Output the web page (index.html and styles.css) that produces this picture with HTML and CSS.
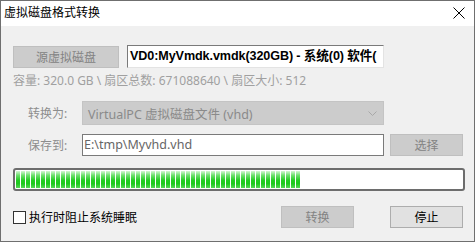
FILE: index.html
```html
<!DOCTYPE html>
<html lang="zh">
<head>
<meta charset="utf-8">
<link rel="stylesheet" href="styles.css">
</head>
<body>
<div class="window">
  <div class="titlebar">
    <span class="title">虚拟磁盘格式转换</span>
    <svg class="close" width="12" height="12" viewBox="0 0 12 12"><path d="M0.5 0.5 L11.5 11.5 M11.5 0.5 L0.5 11.5" stroke="#000" stroke-width="1"/></svg>
  </div>
  <div class="content">
    <div class="row row-src">
      <div class="btn disabled btn-src">源虚拟磁盘</div>
      <div class="srcfield">VD0:MyVmdk.vmdk(320GB) - 系统(0) 软件(</div>
    </div>
    <div class="info">容量: 320.0 GB \ 扇区总数: 671088640 \ 扇区大小: 512</div>
    <div class="row row-conv">
      <span class="label">转换为:</span>
      <div class="select">
        <span>VirtualPC 虚拟磁盘文件 (vhd)</span>
        <svg class="chev" width="9" height="5" viewBox="0 0 9 5"><path d="M0.5 0.5 L4.5 4.5 L8.5 0.5" fill="none" stroke="#a8a8a8" stroke-width="1"/></svg>
      </div>
    </div>
    <div class="row row-save">
      <span class="label">保存到:</span>
      <div class="path">E:\tmp\Myvhd.vhd</div>
      <div class="btn disabled btn-choose">选择</div>
    </div>
    <div class="progress"><div class="fill" style="width:284px"></div></div>
    <div class="row row-bottom">
      <label class="check"><span class="box"></span><span>执行时阻止系统睡眠</span></label>
      <div class="btn disabled btn-conv">转换</div>
      <div class="btn btn-stop">停止</div>
    </div>
  </div>
</div>
</body>
</html>
```

FILE: styles.css
```css
html, body {
  margin: 0;
  padding: 0;
  background: #f0f0f0;
}
.window {
  width: 475px;
  height: 242px;
  box-sizing: border-box;
  border: 1px solid #6f6f6f;
  background: #f0f0f0;
  font-family: "Noto Sans", "Noto Sans CJK SC", sans-serif;
  font-size: 12px;
  color: #000;
  overflow: hidden;
}
.titlebar {
  height: 25px;
  background: #fff;
  display: flex;
  align-items: center;
  justify-content: space-between;
  padding: 0 9px 0 3px;
}
.title {
  font-size: 12px;
  line-height: 16px;
  margin-top: -2px;
}
.close {
  display: block;
  margin-top: -1px;
}
.content {
  padding: 0 11px 0 11px;
}
.row {
  display: flex;
  align-items: center;
}
.btn {
  box-sizing: border-box;
  height: 22px;
  display: flex;
  align-items: center;
  justify-content: center;
  border: 1px solid #adadad;
  background: #e1e1e1;
  color: #000;
  font-size: 12px;
}
.btn.disabled {
  background: #cccccc;
  border-color: #bfbfbf;
  color: #838383;
}
.row-src {
  margin-top: 19px;
  height: 23px;
}
.btn-src {
  width: 106px;
  margin-left: 1px;
}
.srcfield {
  box-sizing: border-box;
  margin-left: 8px;
  width: 257px;
  height: 23px;
  background: #fff;
  border-top: 1px solid #7a7a7a;
  border-left: 1px solid #7a7a7a;
  border-bottom: 1px solid #e3e3e3;
  border-right: 1px solid #e3e3e3;
  font-family: "Liberation Sans", "Noto Sans CJK SC", sans-serif;
  font-weight: bold;
  font-size: 12.6px;
  letter-spacing: -0.1px;
  line-height: 20px;
  padding-left: 2px;
  white-space: nowrap;
  overflow: hidden;
}
.info {
  margin-top: 6px;
  height: 14px;
  line-height: 14px;
  color: #a0a0a0;
  font-size: 12px;
  margin-left: 1px;
}
.label {
  width: 70px;
  padding-left: 16px;
  box-sizing: border-box;
  color: #8d8d8d;
}
.row-conv {
  margin-top: 13px;
}
.select {
  box-sizing: border-box;
  width: 302px;
  height: 24px;
  background: #cccccc;
  border: 1px solid #c4c4c4;
  color: #8a8a8a;
  display: flex;
  align-items: center;
  justify-content: space-between;
  padding: 0 6px 0 5px;
  font-size: 12.5px;
}
.chev { display: block; }
.row-save {
  margin-top: 9px;
}
.path {
  box-sizing: border-box;
  width: 302px;
  height: 22px;
  background: #fff;
  border: 1px solid #7a7a7a;
  color: #666;
  line-height: 20px;
  padding-left: 1px;
  font-size: 12.5px;
}
.btn-choose {
  width: 73px;
  margin-left: 6px;
}
.progress {
  box-sizing: border-box;
  margin-top: 12px;
  margin-left: 1px;
  width: 452px;
  height: 23px;
  border: 2px solid #6d6d6d;
  border-radius: 3px;
  background: #fff;
  padding: 1px 1px;
}
.fill {
  height: 100%;
  background:
    repeating-linear-gradient(to right, transparent 0 4px, #fff 4px 5px),
    linear-gradient(to bottom, #d4f6d4 0%, #6ee06e 25%, #22cc22 55%, #1fc81f 75%, #55d855 100%);
}
.row-bottom {
  margin-top: 15px;
}
.check {
  display: flex;
  align-items: center;
  width: 268px;
  margin-left: 1px;
}
.box {
  box-sizing: border-box;
  width: 13px;
  height: 13px;
  border: 1px solid #333;
  background: #fff;
  margin-right: 3px;
}
.btn-conv {
  width: 73px;
}
.btn-stop {
  width: 73px;
  margin-left: 36px;
}
```
